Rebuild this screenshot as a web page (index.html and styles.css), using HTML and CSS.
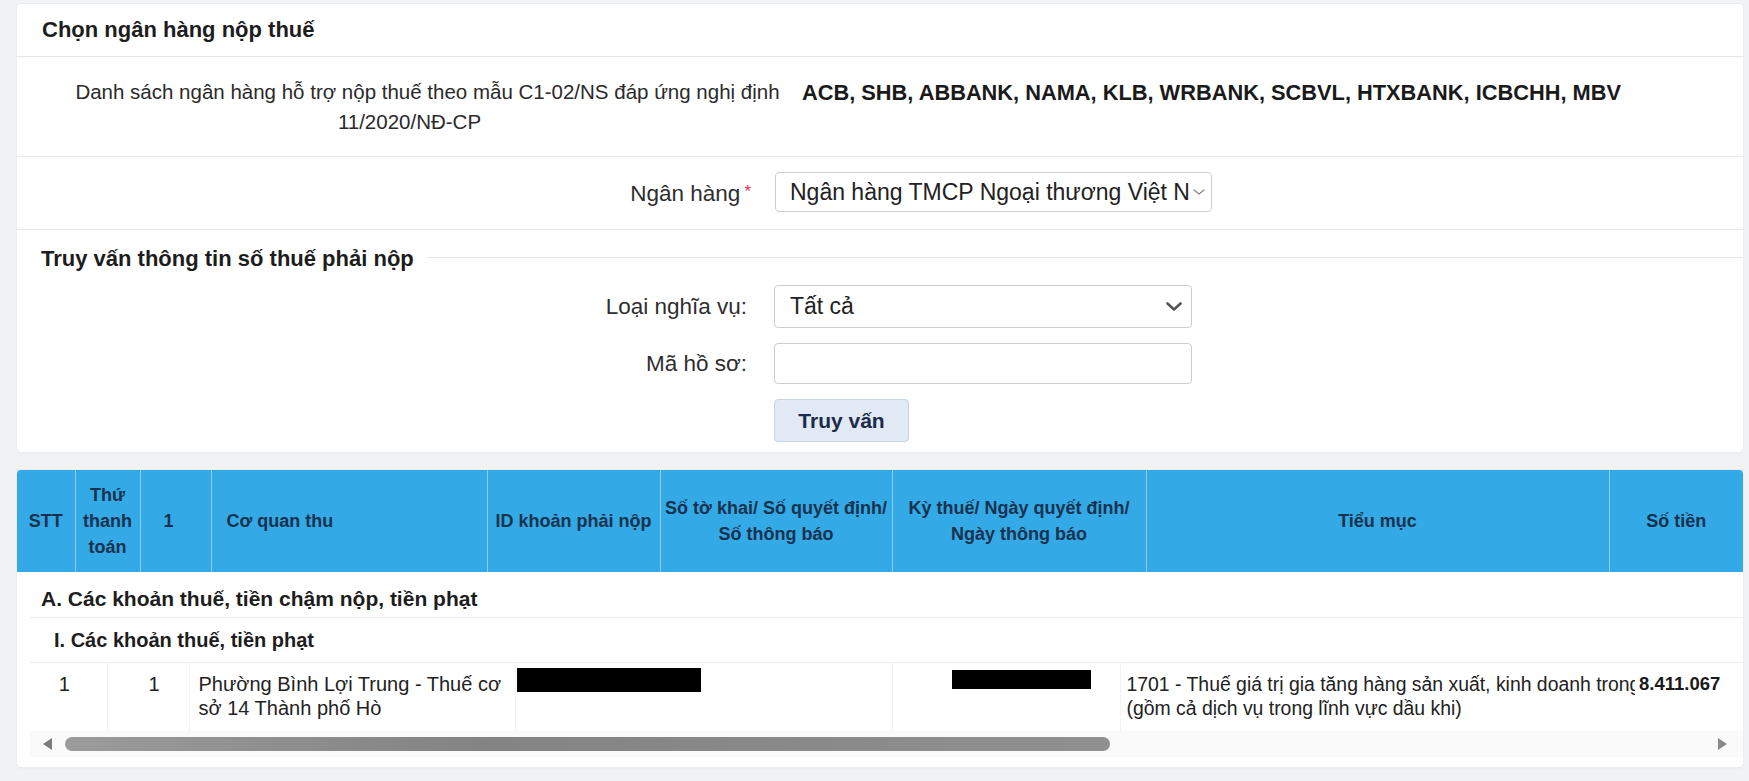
FILE: index.html
```html
<!DOCTYPE html>
<html lang="vi">
<head>
<meta charset="utf-8">
<title>Chọn ngân hàng nộp thuế</title>
<link rel="stylesheet" href="styles.css">
</head>
<body>
<div class="page">
  <section class="card form-card">
    <div class="card-title">Chọn ngân hàng nộp thuế</div>
    <div class="desc-row">
      <div class="desc-label">Danh sách ngân hàng hỗ trợ nộp thuế theo mẫu C1-02/NS đáp ứng nghị định<br><span class="desc-line2">11/2020/NĐ-CP</span></div>
      <div class="desc-value">ACB, SHB, ABBANK, NAMA, KLB, WRBANK, SCBVL, HTXBANK, ICBCHH, MBV</div>
    </div>
    <div class="bank-row">
      <label class="form-label bank-label">Ngân hàng<span class="req">*</span></label>
      <div class="select bank-select">
        <span class="select-text">Ngân hàng TMCP Ngoại thương Việt Nam</span>
        <svg class="chev-small" viewBox="0 0 12 6" width="12" height="6"><path d="M1 1 L6 5 L11 1" fill="none" stroke="#8a8a8a" stroke-width="1.4" stroke-linecap="round" stroke-linejoin="round"/></svg>
      </div>
    </div>
    <div class="query">
      <div class="legend"><span class="legend-text">Truy vấn thông tin số thuế phải nộp</span><span class="legend-line"></span></div>
      <div class="form-row">
        <label class="form-label q-label">Loại nghĩa vụ:</label>
        <div class="select type-select">
          <span class="select-text">Tất cả</span>
          <svg class="chev" viewBox="0 0 16 9" width="16" height="9"><path d="M1.5 1.5 L8 7.5 L14.5 1.5" fill="none" stroke="#555" stroke-width="2.6" stroke-linecap="round" stroke-linejoin="round"/></svg>
        </div>
      </div>
      <div class="form-row">
        <label class="form-label q-label">Mã hồ sơ:</label>
        <div class="text-input"></div>
      </div>
      <div class="form-row">
        <span class="form-label q-label"></span>
        <button class="btn" type="button">Truy vấn</button>
      </div>
    </div>
  </section>

  <section class="card table-card">
    <table class="head-table">
      <colgroup>
        <col class="h1"><col class="h2"><col class="h3"><col class="h4"><col class="h5"><col class="h6"><col class="h7"><col class="h8"><col class="h9">
      </colgroup>
      <tr>
        <th>STT</th>
        <th>Thứ<br>thanh<br>toán</th>
        <th class="th-one">1</th>
        <th class="th-left">Cơ quan thu</th>
        <th>ID khoản phải nộp</th>
        <th>Số tờ khai/ Số quyết định/<br>Số thông báo</th>
        <th>Kỳ thuế/ Ngày quyết định/<br>Ngày thông báo</th>
        <th>Tiểu mục</th>
        <th>Số tiền</th>
      </tr>
    </table>
    <div class="group-a">A. Các khoản thuế, tiền chậm nộp, tiền phạt</div>
    <div class="body-wrap">
      <div class="group-i">I. Các khoản thuế, tiền phạt</div>
      <table class="data-table">
        <colgroup>
          <col class="d1"><col class="d2"><col class="d3"><col class="d4"><col class="d5"><col class="d6"><col class="d7">
        </colgroup>
        <tr>
          <td class="td-center">1</td>
          <td class="td-right">1</td>
          <td class="td-agency">Phường Bình Lợi Trung - Thuế cơ<br>sở 14 Thành phố Hò</td>
          <td class="td-redact1"><div class="redact r1"></div></td>
          <td class="td-redact2"><div class="redact r2"></div></td>
          <td class="td-muc"><span class="line">1701 - Thuế giá trị gia tăng hàng sản xuất, kinh doanh trong nước</span><span class="line">(gồm cả dịch vụ trong lĩnh vực dầu khi)</span></td>
          <td class="td-amount">8.411.067</td>
        </tr>
      </table>
      <div class="hscroll">
        <span class="arrow arrow-left"></span>
        <div class="track"><div class="thumb"></div></div>
        <span class="arrow arrow-right"></span>
      </div>
    </div>
  </section>
</div>
</body>
</html>
```

FILE: styles.css
```css
* { box-sizing: border-box; }
html, body { margin: 0; }
body {
  background: #f1f2f4;
  font-family: "Liberation Sans", Arial, Helvetica, sans-serif;
  color: #222;
}
.page {
  padding: 4px 6px 14px 17px;
  display: flex;
  flex-direction: column;
  gap: 18px;
}
.card {
  background: #fff;
  border-radius: 4px;
  box-shadow: 0 0 0 1px #eaecef, 0 1px 3px rgba(0,0,0,0.05);
  overflow: hidden;
}

/* ---------- form card ---------- */
.card-title {
  height: 53px;
  display: flex;
  align-items: center;
  padding-left: 25px;
  font-size: 22px;
  font-weight: bold;
  color: #1d1d1d;
  border-bottom: 1px solid #e8e8e8;
}
.desc-row {
  display: flex;
  align-items: flex-start;
  height: 100px;
  padding-top: 20px;
  border-bottom: 1px solid #e8e8e8;
}
.desc-label {
  width: 747px;
  margin-left: 37px;
  text-align: center;
  font-size: 20.5px;
  line-height: 30px;
  color: #2a2a2a;
  white-space: nowrap;
}
.desc-line2 {
  display: inline-block;
  margin-right: 36px;
}
.desc-value {
  margin-left: 1px;
  margin-top: 4px;
  font-size: 21.8px;
  line-height: 24px;
  font-weight: bold;
  color: #1a1a1a;
  white-space: nowrap;
}
.bank-row {
  display: flex;
  align-items: flex-start;
  height: 73px;
  padding-top: 15px;
  border-bottom: 1px solid #e8e8e8;
}
.form-label {
  flex: none;
  text-align: right;
  font-size: 22.5px;
  color: #2e2e2e;
}
.bank-label {
  width: 758px;
  padding-right: 24px;
  line-height: 40px;
}
.req {
  color: #e0394a;
  font-size: 17px;
  margin-left: 4px;
  vertical-align: 4px;
}
.select {
  display: flex;
  align-items: center;
  background: #fff;
  border: 1px solid #cdcdcd;
  border-radius: 4px;
  font-size: 23px;
  color: #222;
}
.select-text {
  flex: 1;
  overflow: hidden;
  white-space: nowrap;
}
.bank-select {
  width: 437px;
  height: 40px;
  padding: 0 6px 0 14px;
}
.chev-small { flex: none; margin-left: 3px; }
.query {
  padding-top: 16px;
  padding-bottom: 10px;
}
.legend {
  display: flex;
  align-items: center;
  height: 26px;
  padding-left: 24px;
}
.legend-text {
  font-size: 22px;
  font-weight: bold;
  color: #1d1d1d;
  white-space: nowrap;
}
.legend-line {
  flex: 1;
  height: 1px;
  margin: -3px 0 0 13px;
  background: #e6e6e6;
}
.form-row {
  display: flex;
  align-items: center;
  margin-top: 15px;
}
.legend + .form-row { margin-top: 13px; }
.q-label {
  width: 757px;
  padding-right: 27px;
}
.type-select {
  width: 418px;
  height: 43px;
  padding: 0 9px 0 15px;
}
.chev { flex: none; }
.text-input {
  width: 418px;
  height: 41px;
  border: 1px solid #cdcdcd;
  border-radius: 4px;
  background: #fff;
}
.btn {
  width: 135px;
  height: 43px;
  padding: 0;
  background: #e1e9f4;
  border: 1px solid #c9d4e3;
  border-radius: 4px;
  font-family: inherit;
  font-size: 21px;
  font-weight: bold;
  color: #1b2b4b;
}

/* ---------- table card ---------- */
.table-card { padding-bottom: 10px; }
.head-table, .data-table {
  width: 100%;
  border-collapse: collapse;
  table-layout: fixed;
}
.head-table { background: #33a9e5; }
.h1 { width: 58px; }
.h2 { width: 65px; }
.h3 { width: 71px; }
.h4 { width: 276px; }
.h5 { width: 173px; }
.h6 { width: 232px; }
.h7 { width: 254px; }
.h8 { width: 463px; }
.h9 { width: 134px; }
.head-table th {
  height: 102px;
  padding: 0 2px;
  font-size: 18px;
  line-height: 26px;
  font-weight: bold;
  color: #17324f;
  text-align: center;
  white-space: nowrap;
  border-left: 1px solid #8ccff2;
}
.head-table th:first-child { border-left: none; }
.head-table .th-one { text-align: left; padding-left: 23px; }
.head-table .th-left { text-align: left; padding-left: 15px; }

.group-a {
  height: 45px;
  display: flex;
  align-items: center;
  padding: 9px 0 0 24px;
  font-size: 21px;
  font-weight: bold;
  color: #1d1d1d;
}
.body-wrap { margin-left: 13px; }
.group-i {
  height: 45px;
  display: flex;
  align-items: center;
  padding-left: 24px;
  border-top: 1px solid #ececec;
  font-size: 20px;
  font-weight: bold;
  color: #1d1d1d;
}
.d1 { width: 77px; }
.d2 { width: 82px; }
.d3 { width: 326px; }
.d4 { width: 377px; }
.d5 { width: 228px; }
.d6 { width: 515px; }
.d7 { width: 108px; }
.data-table { border-top: 1px solid #ececec; }
.data-table td {
  height: 68px;
  padding: 9px 0 0;
  vertical-align: top;
  font-size: 20px;
  line-height: 24px;
  color: #222;
  border-left: 1px solid #f3f3f3;
  white-space: nowrap;
}
.data-table td:first-child { border-left: none; }
.data-table .td-center { text-align: center; padding-right: 8px; }
.data-table .td-right { text-align: right; padding-right: 29px; }
.data-table .td-agency { padding-left: 9px; }
.data-table .td-redact1 { padding-top: 5px; }
.data-table .td-redact2 { padding-top: 7px; }
.redact { background: #000; }
.r1 { width: 184px; height: 24px; margin-left: 1px; }
.r2 { width: 139px; height: 19px; margin-left: 59px; }
.data-table .td-muc {
  padding-left: 6px;
  font-size: 19.4px;
  overflow: hidden;
}
.td-muc .line { display: block; }
.data-table .td-amount {
  padding-left: 4px;
  font-size: 18.5px;
  font-weight: bold;
  color: #1a1a1a;
  border-left: none;
}

.hscroll {
  height: 26px;
  display: flex;
  align-items: center;
  padding: 0 16px 0 13px;
  background: #fafafa;
}
.arrow {
  flex: none;
  width: 0;
  height: 0;
  border-top: 6px solid transparent;
  border-bottom: 6px solid transparent;
}
.arrow-left { border-right: 9px solid #7b7b7b; }
.arrow-right { border-left: 9px solid #8a8a8a; }
.track {
  flex: 1;
  height: 14px;
  padding-left: 13px;
}
.thumb {
  width: 1045px;
  height: 14px;
  border-radius: 7px;
  background: linear-gradient(90deg, #9b9b9b, #838383 40%, #8c8c8c 80%, #909090);
}
```
